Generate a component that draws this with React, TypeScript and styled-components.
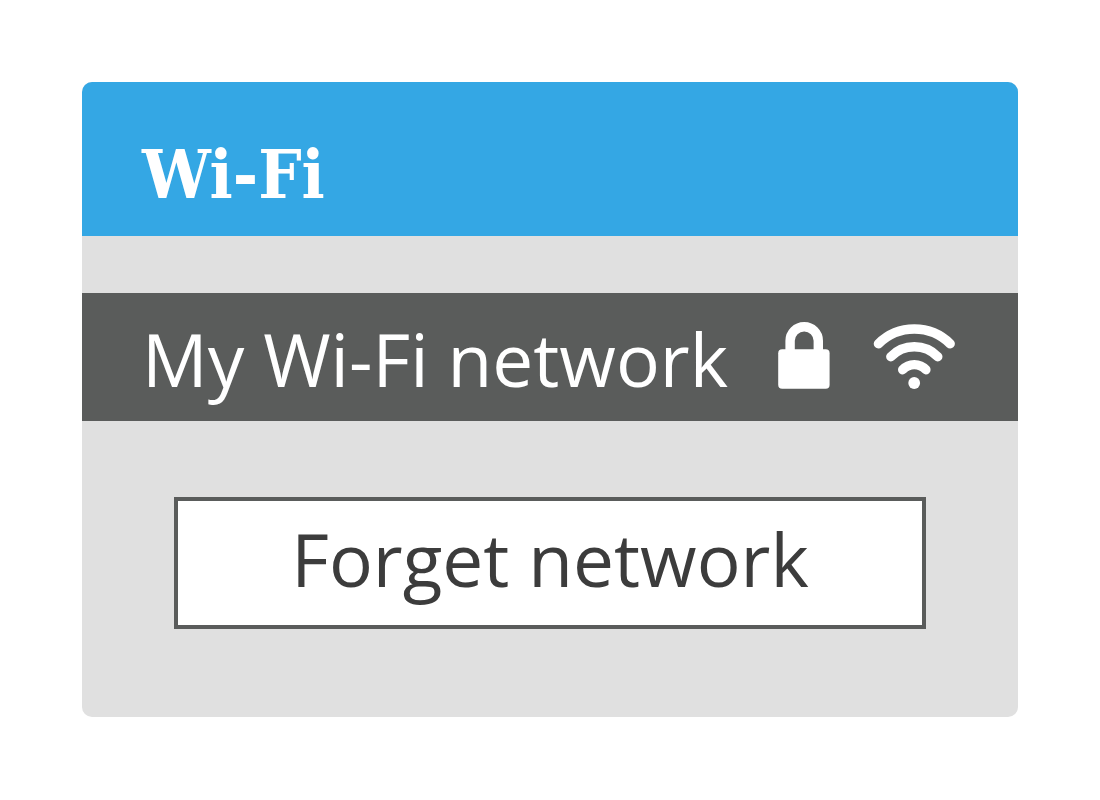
import React from "react";
import styled, { createGlobalStyle } from "styled-components";

const GlobalStyle = createGlobalStyle`
  *, *::before, *::after { box-sizing: border-box; }
  body {
    margin: 0;
    background: #ffffff;
    font-family: "Open Sans", "Noto Sans", sans-serif;
  }
`;

const Page = styled.main`
  padding: 82px;
`;

const Card = styled.section`
  overflow: hidden;
  border-radius: 10px;
  background: #e0e0e0;
`;

const Header = styled.header`
  padding: 52px 60px 22px;
  background: #34a7e4;
`;

const Title = styled.h1`
  margin: 0;
  color: #ffffff;
  font-family: "DejaVu Serif Condensed", "DejaVu Serif", serif;
  font-size: 68px;
  font-weight: 700;
  line-height: 80px;
`;

const NetworkRow = styled.div`
  display: flex;
  align-items: center;
  justify-content: space-between;
  margin-top: 57px;
  padding: 26px 63px 22px 60px;
  background: #5a5c5b;
  color: #ffffff;
`;

const NetworkName = styled.span`
  font-size: 73px;
  line-height: 80px;
  white-space: nowrap;
`;

const StatusIcons = styled.div`
  display: flex;
  gap: 43px;
`;

const Icon = styled.svg`
  display: block;
  flex: none;
  height: 74px;
`;

const Actions = styled.div`
  padding: 76px 92px 88px;
`;

const ForgetButton = styled.button`
  display: block;
  width: 100%;
  padding: 18px 0 26px;
  border: 4px solid #5a5c5b;
  border-radius: 0;
  background: #ffffff;
  color: #3c3c3c;
  font-family: inherit;
  font-size: 73px;
  line-height: 80px;
  white-space: nowrap;
  cursor: pointer;
`;

const LockIcon = () => (
  <Icon width="52" viewBox="0 0 52 74" role="img" aria-label="Secured">
    <path
      d="M12.1 30V18.8a14.1 14.1 0 0 1 28.2 0V30"
      fill="none"
      stroke="currentColor"
      strokeWidth="9.4"
    />
    <rect x="0.2" y="27.3" width="51.4" height="39.5" rx="4" fill="currentColor" />
  </Icon>
);

const WifiIcon = () => (
  <Icon width="82" viewBox="0 0 82 74" role="img" aria-label="Signal strength">
    <g fill="none" stroke="currentColor" strokeWidth="9.4" strokeLinecap="round">
      <path d="M5.4 21.8A51 51 0 0 1 77.2 21.8" />
      <path d="M17.8 34.7A32.8 32.8 0 0 1 64.8 34.7" />
      <path d="M29.7 47.7A15.7 15.7 0 0 1 52.9 47.7" />
    </g>
    <circle cx="41.2" cy="61" r="5.9" fill="currentColor" />
  </Icon>
);

export default function App() {
  return (
    <>
      <GlobalStyle />
      <Page>
        <Card>
          <Header>
            <Title>Wi-Fi</Title>
          </Header>
          <NetworkRow>
            <NetworkName>My Wi-Fi network</NetworkName>
            <StatusIcons>
              <LockIcon />
              <WifiIcon />
            </StatusIcons>
          </NetworkRow>
          <Actions>
            <ForgetButton type="button">Forget network</ForgetButton>
          </Actions>
        </Card>
      </Page>
    </>
  );
}
